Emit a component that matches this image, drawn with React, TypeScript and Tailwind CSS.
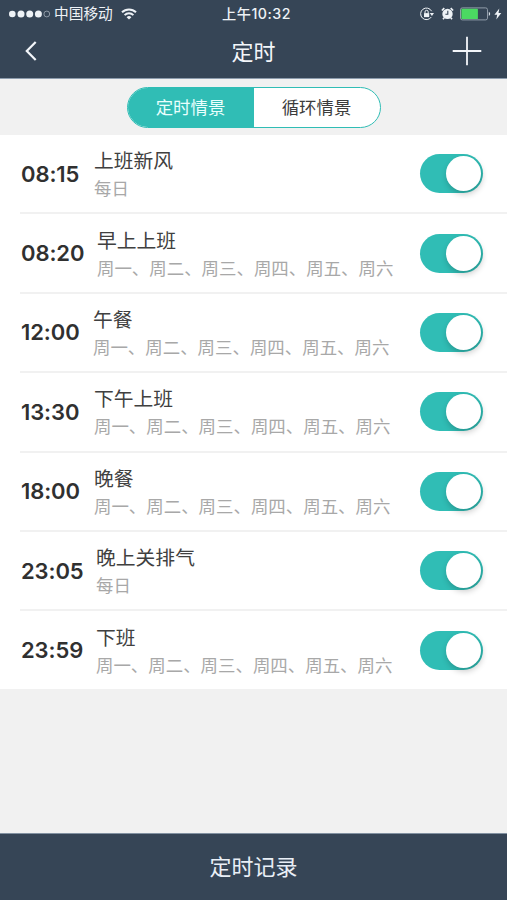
type Timer = { time: string; name: string; days: string; timeClass: string };

const WEEK = '周一、周二、周三、周四、周五、周六';

const timers: Timer[] = [
  { time: '08:15', name: '上班新风', days: '每日', timeClass: 'w-[73px]' },
  { time: '08:20', name: '早上上班', days: WEEK, timeClass: 'w-[76px]' },
  { time: '12:00', name: '午餐', days: WEEK, timeClass: 'w-[72px]' },
  { time: '13:30', name: '下午上班', days: WEEK, timeClass: 'w-[73px]' },
  { time: '18:00', name: '晚餐', days: WEEK, timeClass: 'w-[73px]' },
  { time: '23:05', name: '晚上关排气', days: '每日', timeClass: 'w-[75px]' },
  { time: '23:59', name: '下班', days: WEEK, timeClass: 'w-[75px]' },
];

function StatusBar() {
  return (
    <div className="relative flex h-[27px] items-center justify-between pr-[5px] pl-[9px] text-[#eef2f6]">
      <div className="flex items-center">
        <svg width="42" height="8" viewBox="0 0 42 8" fill="currentColor">
          <circle cx="3.3" cy="4" r="3.3" />
          <circle cx="12" cy="4" r="3.5" />
          <circle cx="20.7" cy="4" r="3.5" />
          <circle cx="29.4" cy="4" r="3.5" />
          <circle cx="37.8" cy="4" r="2.9" fill="none" stroke="#a5afba" strokeWidth="0.8" />
        </svg>
        <span className="ml-[3px] pt-px text-[14.7px] leading-[27px]">中国移动</span>
        <svg className="ml-[8px]" width="16" height="12" viewBox="0 0 16 12" fill="none" stroke="currentColor" strokeWidth="2">
          <path d="M1 4.3a10 10 0 0 1 14 0" />
          <path d="M3.6 7.1a6.3 6.3 0 0 1 8.8 0" />
          <path d="M8 11.6 5.6 9.2a3.5 3.5 0 0 1 4.8 0z" fill="currentColor" stroke="none" />
        </svg>
      </div>
      <div className="absolute inset-x-0 top-0 pl-[6px] text-center text-[14.2px] leading-[27px] font-medium tracking-[0.5px]">上午10:32</div>
      <div className="flex items-center">
        <svg width="15" height="14" viewBox="0 0 15 14" fill="none" stroke="currentColor" strokeWidth="1">
          <path d="M11.3 10A5.8 5.8 0 1 1 11.6 4.2" />
          <path d="M9.8 6h4.2l-2.1 3z" fill="currentColor" stroke="none" />
          <rect x="4" y="6.1" width="5.2" height="4" fill="currentColor" stroke="none" />
          <path d="M5 6V4.9a1.6 1.6 0 0 1 3.2 0V6" />
        </svg>
        <svg className="ml-[6px]" width="13" height="13" viewBox="0 0 13 13">
          <circle cx="6.5" cy="6.9" r="5.2" fill="currentColor" />
          <path d="M.9 3.5 3.3 1.1M12.1 3.5 9.7 1.1M3.2 10.8l-1.2 1.4M9.8 10.8l1.2 1.4" stroke="currentColor" strokeWidth="1.7" />
          <path d="M6.8 3.7v3.5H4.4" fill="none" stroke="#364556" strokeWidth="1.1" />
        </svg>
        <svg className="ml-[6px]" width="31" height="14" viewBox="0 0 31 14">
          <rect x=".5" y=".9" width="27" height="12" rx="1.8" fill="none" stroke="#929daa" />
          <rect x="1.4" y="1.8" width="16.5" height="10.3" rx=".6" fill="#4bd962" />
          <path d="M28.8 4.7q2.8 2.2 0 4.4z" fill="#dbe1e7" />
        </svg>
        <svg className="ml-[3px]" width="8" height="12" viewBox="0 0 8 12" fill="currentColor">
          <path d="M5.3.4.4 6.7h2.8L2.3 11.6 7.3 5H4.5z" />
        </svg>
      </div>
    </div>
  );
}

function Toggle() {
  return (
    <div className="mr-[24px] flex h-[39px] w-[63px] shrink-0 items-center justify-end rounded-full bg-[#30bdb5] pr-[2px]">
      <div className="size-[35px] rounded-full bg-white shadow-[1px_3px_6px_rgba(0,0,0,0.22)]" />
    </div>
  );
}

export default function App() {
  return (
    <div className="flex h-[900px] w-[507px] flex-col overflow-hidden bg-[#f1f1f1] font-[Inter,'Noto_Sans_CJK_SC',sans-serif]">
      <header className="h-[79px] shrink-0 border-b border-[#8d9cad] bg-[#364556]">
        <StatusBar />
        <div className="relative flex h-[48px] items-center justify-between pr-[25px] pl-[24px] text-[#f3f6fa]">
          <svg width="14" height="20" viewBox="0 0 14 20" fill="none" stroke="currentColor" strokeWidth="2.2">
            <path d="M11.7 1 2.8 10l8.9 9" />
          </svg>
          <h1 className="absolute inset-x-0 top-px text-center text-[22px] leading-[49px] font-normal">定时</h1>
          <svg width="30" height="30" viewBox="0 0 30 30" fill="none" stroke="currentColor" strokeWidth="1.8">
            <path d="M15 .7v28.6M.7 15h28.6" />
          </svg>
        </div>
      </header>

      <div className="flex h-[56px] shrink-0 items-center justify-center">
        <div className="flex h-[41px] w-[254px] overflow-hidden rounded-full border border-[#30bdb5] bg-white text-[17.4px] leading-[39px]">
          <div className="w-[126px] bg-[#30bdb5] text-center text-[#eafffd]">定时情景</div>
          <div className="flex-1 text-center text-[#3c3c3c]">循环情景</div>
        </div>
      </div>

      <main className="flex h-[554px] shrink-0 flex-col bg-white">
        {timers.map((t, i) => (
          <div key={t.time} className={'flex pl-[20px] ' + (i < timers.length - 1 ? 'h-[79.4px] shrink-0' : 'flex-1')}>
            <div className={'flex flex-1 items-center pl-px ' + (i < timers.length - 1 ? 'border-b-2 border-[#f1f1f1]' : '')}>
              <div className={'shrink-0 text-[22px] leading-none font-semibold tracking-[-0.1px] text-[#303030] ' + t.timeClass}>{t.time}</div>
              <div className="flex-1 pt-[3px] whitespace-nowrap">
                <div className="text-[19.8px] leading-[27px] text-[#404040]">{t.name}</div>
                <div className="text-[17.45px] leading-[27px] text-[#a8a8a8]">{t.days}</div>
              </div>
              <Toggle />
            </div>
          </div>
        ))}
      </main>

      <div className="flex-1" />
      <footer className="h-[67px] shrink-0 border-t border-[#8291a1] bg-[#364556] text-center text-[22px] leading-[67px] text-[#e9eff6]">
        定时记录
      </footer>
    </div>
  );
}
